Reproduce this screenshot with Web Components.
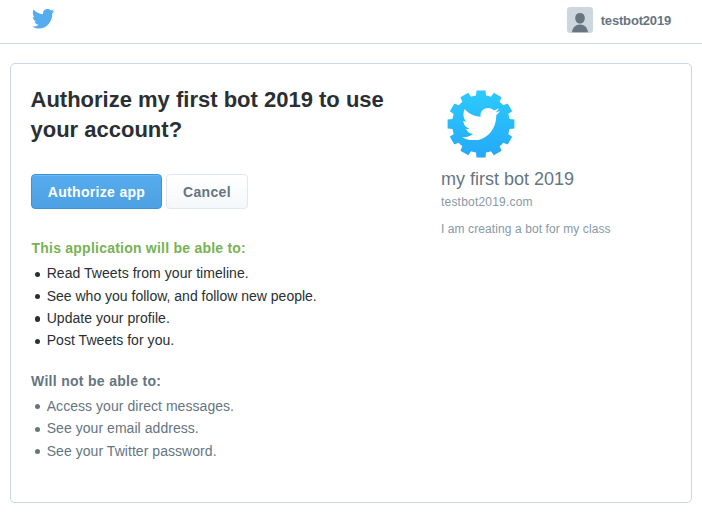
<!DOCTYPE html>
<html lang="en">
<head>
<meta charset="utf-8">
<title>Authorize an application</title>
<style>
body{margin:0;background:#fff;color:#292f33;font-family:"Liberation Sans",Arial,sans-serif;font-size:14px;height:512px;overflow:hidden}
</style>
</head>
<body>
<auth-page></auth-page>
<script>
const define = (name, html) => customElements.define(name, class extends HTMLElement {
  constructor() {
    super();
    const t = document.createElement('template');
    t.innerHTML = html;
    this.attachShadow({mode: 'open'}).append(t.content.cloneNode(true));
  }
});

define('bird-icon', `
<style>:host{display:block}svg{display:block;width:100%;height:100%;fill:currentColor}</style>
<svg viewBox="0 0 112 96" preserveAspectRatio="none"><path d="M8 3C20 17 36 25 55 26C52 11 63 0 77 0C84 0 90 3 94 7C99 6 104 4 108 1C107 6 103 10 99 13C104 12 108 11 112 9C109 14 105 18 101 21C102 62 73 96 35 96C22 96 10 92 0 86C13 87 24 84 33 77C23 76 15 70 12 61C16 62 19 62 22 61C12 59 4 50 4 38C7 40 11 41 14 41C4 34 1 17 8 3Z"/></svg>`);

define('user-badge', `
<style>
:host{display:flex;align-items:center;gap:8px;font-weight:bold;font-size:13px;line-height:16px;color:#66757f;letter-spacing:-.18px}
span{margin-top:1px}
svg{display:block;width:26px;height:26px;border-radius:3px;background:#ccd6dd}
</style>
<svg viewBox="0 0 26 26" fill="#66757f"><path d="M13 6c3 0 4.800 1.900 4.800 5 0 3.200-2 5.600-4.800 5.600S8.200 14.200 8.200 11C8.200 7.900 10 6 13 6z"/><path d="M5 25.300c.6-4.700 3.700-7.700 8-7.700s7.400 3 8 7.700z"/></svg>
<span><slot></slot></span>`);

define('top-bar', `
<style>
:host{display:flex;box-sizing:border-box;height:44px;border-bottom:1px solid #ccd6dd;justify-content:space-between;align-items:flex-start;padding:7px 31px 0 31px}
bird-icon{width:22.500px;height:19.500px;margin:2.200px 0 0 .6px;color:#55acee}
</style>
<bird-icon></bird-icon><user-badge><slot></slot></user-badge>`);

define('ui-button', `
<style>
:host{display:flex;box-sizing:border-box;height:35px;align-items:center;justify-content:center;border:1px solid #e1e8ed;border-radius:4px;background:linear-gradient(#fff,#f5f8fa);color:#66757f;font-weight:bold;font-size:14px;letter-spacing:.32px;width:82px}
:host([primary]){width:131px;border-color:#3b94d9;background:linear-gradient(#55acee,#4ea1e2);color:#fff;box-shadow:inset 0 1px 0 rgba(255,255,255,.15)}
</style>
<span><slot></slot></span>`);

define('permission-list', `
<style>
:host{display:block;color:#292f33}
:host([denied]){color:#66757f}
h2{margin:0;font-size:14px;line-height:20px;color:#77b255;letter-spacing:.23px;padding-left:.5px}
:host([denied]) h2{color:#66757f;letter-spacing:.3px;padding-left:0}
div{display:grid;grid-auto-rows:22.4px;margin-top:4px}
</style>
<h2><slot name="title"></slot></h2><div><slot></slot></div>`);

define('permission-item', `
<style>
:host{display:flex;align-items:center;gap:6.500px;padding-left:4px;font-size:14px;line-height:22px;white-space:nowrap}
i{width:5.200px;height:5.200px;border-radius:50%;background:currentColor;margin-top:2px}
</style>
<i></i><span><slot></slot></span>`);

const teeth = Array.from({length: 12}, (_, k) =>
  `<path d="M-5.300-26L-4.500-33.400H4.500L5.300-26z" transform="rotate(${k * 30})"/>`).join('');
define('app-logo', `
<style>
:host{display:grid;width:68px;height:68px;place-items:center}
svg,bird-icon{grid-area:1/1}
svg{width:68px;height:68px}
bird-icon{width:38px;height:32.500px;color:#fff;z-index:1}
</style>
<svg viewBox="-34 -34 68 68"><defs><linearGradient id="g" x1="0" x2="0" y1="0" y2="1"><stop stop-color="#2ccbfd"/><stop offset="1" stop-color="#25a8f8"/></linearGradient>
<clipPath id="c"><circle r="29"/>${teeth}</clipPath></defs>
<rect x="-34" y="-34" width="68" height="68" fill="url(#g)" clip-path="url(#c)"/></svg>
<bird-icon></bird-icon>`);

define('app-info', `
<style>
:host{display:block;color:#8899a6;white-space:nowrap}
app-logo{margin-left:6px}
h2{margin:9px 0 0;font-weight:normal;font-size:18px;line-height:24px;color:#66757f}
.site{font-size:12px;line-height:16px;margin-top:3px;letter-spacing:.2px}
.about{font-size:12px;line-height:16px;margin-top:11px;letter-spacing:.09px}
</style>
<app-logo></app-logo>
<h2><span><slot name="name"></slot></span></h2>
<div class="site"><span><slot name="site"></slot></span></div>
<div class="about"><span><slot></slot></span></div>`);

define('auth-page', `
<style>
:host{display:block}
main{box-sizing:border-box;margin:19px 10px 0;height:440px;border:1px solid #ccd6dd;border-radius:5px;display:grid;grid-template-columns:410px 1fr;padding:20px 0 0 20px}
h1{margin:1px 0 0 -.5px;font-size:22px;line-height:30px;white-space:nowrap}
.actions{display:flex;gap:4px;margin:29px 0 29px}
app-info{margin-top:6px}
permission-list+permission-list{margin-top:19px}
.wide{letter-spacing:.05px}
</style>
<top-bar>testbot2019</top-bar>
<main>
<section>
<h1>Authorize my first bot 2019 to use<br>your account?</h1>
<div class="actions"><ui-button primary>Authorize app</ui-button><ui-button>Cancel</ui-button></div>
<permission-list><span slot="title">This application will be able to:</span>
<permission-item class="wide">Read Tweets from your timeline.</permission-item>
<permission-item>See who you follow, and follow new people.</permission-item>
<permission-item class="wide">Update your profile.</permission-item>
<permission-item class="wide">Post Tweets for you.</permission-item></permission-list>
<permission-list denied><span slot="title">Will not be able to:</span>
<permission-item class="wide">Access your direct messages.</permission-item>
<permission-item class="wide">See your email address.</permission-item>
<permission-item class="wide">See your Twitter password.</permission-item></permission-list>
</section>
<app-info><span slot="name">my first bot 2019</span><span slot="site">testbot2019.com</span>I am creating a bot for my class</app-info>
</main>`);
</script>
</body>
</html>
